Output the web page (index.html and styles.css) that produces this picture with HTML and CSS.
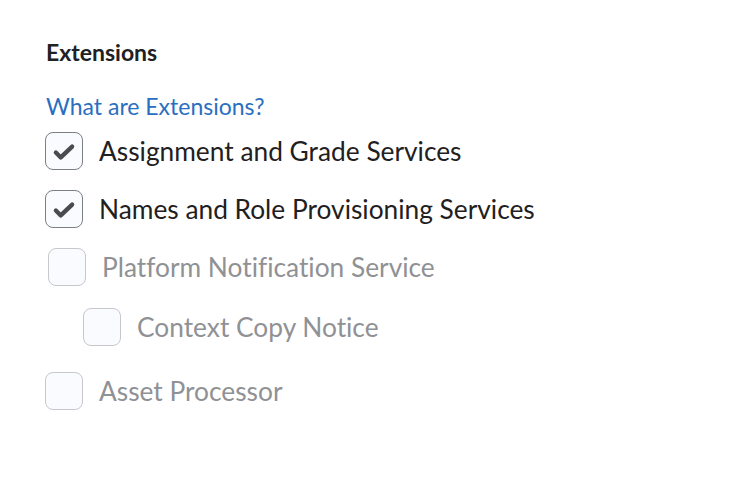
FILE: index.html
```html
<!DOCTYPE html>
<html lang="en">
<head>
  <meta charset="UTF-8" />
  <title>Extensions</title>
  <link rel="stylesheet" href="styles.css">
</head>
<body>
  <div class="panel">
    <h2 class="title">Extensions</h2>
    <a class="help-link" href="#">What are Extensions?</a>

    <ul class="ext-list">
      <li class="ext">
        <span class="box checked">
          <svg class="tick" viewBox="0 0 24 24"><path d="M4.5 12.5L9 17L19.5 7" fill="none" stroke="#494c4e" stroke-width="4" stroke-linecap="round" stroke-linejoin="round"/></svg>
        </span>
        <span class="label">Assignment and Grade Services</span>
      </li>
      <li class="ext">
        <span class="box checked">
          <svg class="tick" viewBox="0 0 24 24"><path d="M4.5 12.5L9 17L19.5 7" fill="none" stroke="#494c4e" stroke-width="4" stroke-linecap="round" stroke-linejoin="round"/></svg>
        </span>
        <span class="label">Names and Role Provisioning Services</span>
      </li>
      <li class="ext disabled shift">
        <span class="box"></span>
        <span class="label">Platform Notification Service</span>
      </li>
      <li class="ext disabled nested">
        <span class="box"></span>
        <span class="label">Context Copy Notice</span>
      </li>
      <li class="ext disabled last">
        <span class="box"></span>
        <span class="label">Asset Processor</span>
      </li>
    </ul>
  </div>
</body>
</html>
```

FILE: styles.css
```css
* {
  box-sizing: border-box;
}

body {
  margin: 0;
  background: #fff;
  font-family: Lato, "Noto Sans", sans-serif;
  font-variant-ligatures: none;
  color: #202122;
}

.panel {
  padding: 40px 0 0 45px;
}

.title {
  margin: 0 0 27px 1px;
  font-size: 23px;
  font-weight: 700;
  line-height: 25px;
}

.help-link {
  display: block;
  margin-left: 1px;
  font-size: 23px;
  line-height: 28px;
  color: #2a6ebf;
  text-decoration: none;
}

.ext-list {
  list-style: none;
  margin: 12px 0 0;
  padding: 0;
}

.ext {
  display: flex;
  align-items: center;
  gap: 16px;
  margin-bottom: 20px;
}

.box {
  width: 38px;
  height: 38px;
  flex-shrink: 0;
  display: flex;
  align-items: center;
  justify-content: center;
  border: 1.5px solid #7c8083;
  border-radius: 8px;
  background: #f9fbff;
}

.tick {
  width: 26px;
  height: 26px;
  margin: 1px 1px 0 0;
}

.label {
  font-size: 26.3px;
  line-height: 30px;
  color: #1f2021;
}

.disabled .box {
  border-color: #c6c8cb;
}

.disabled .label {
  color: #8f9194;
}

.shift {
  margin-left: 3px;
  margin-bottom: 22px;
}

.nested {
  margin-left: 38px;
  margin-bottom: 26px;
}
```
